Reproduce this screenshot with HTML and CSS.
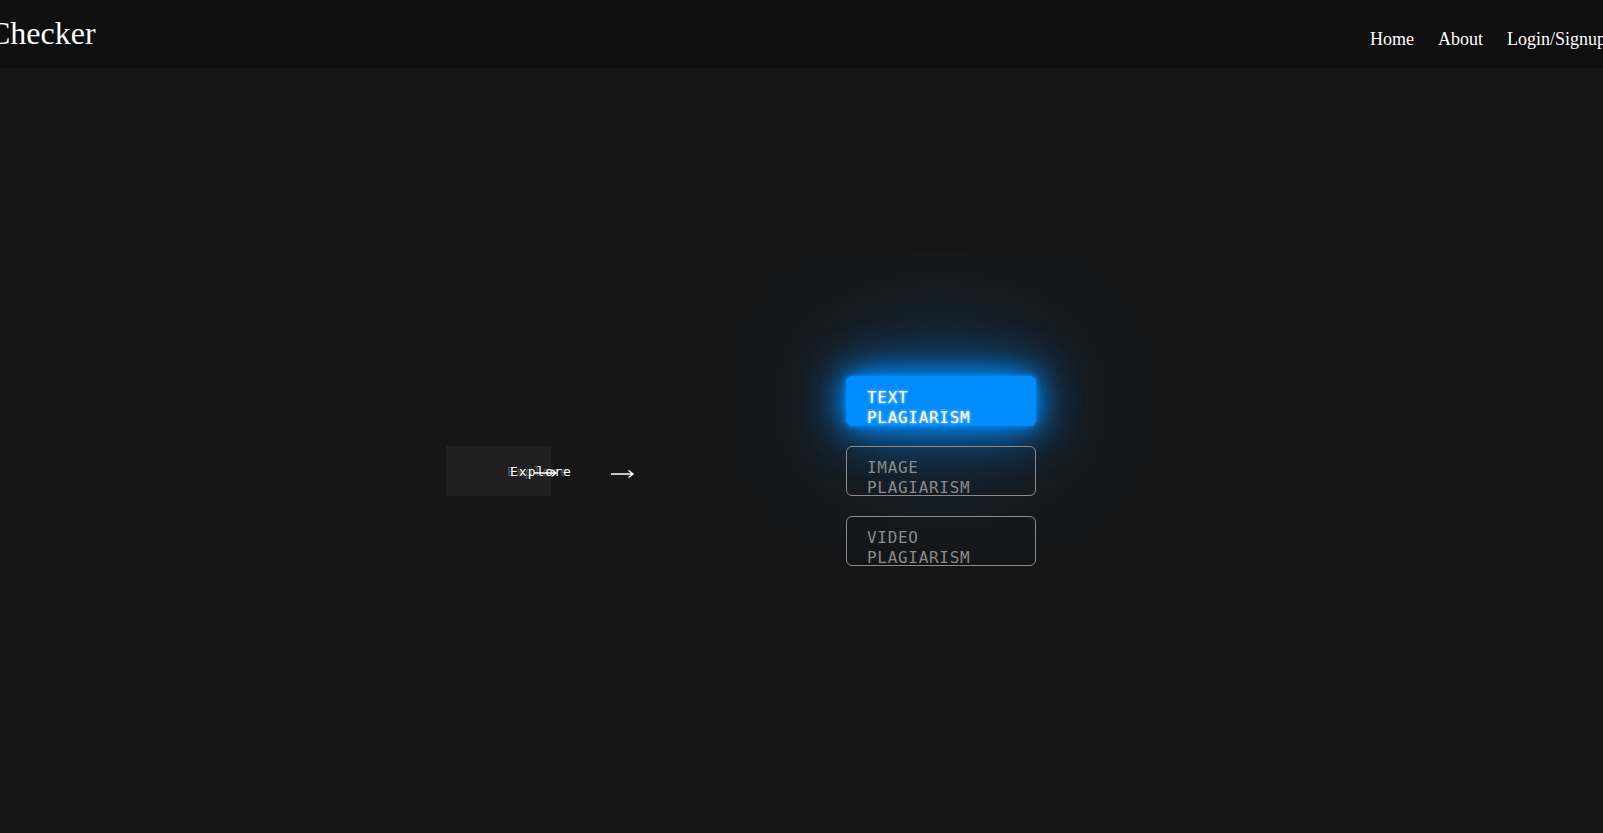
FILE: index.html
```html
<!DOCTYPE html>
<html lang="en">
<head>
<meta charset="utf-8">
<title>Plagiarism Checker</title>
<link rel="stylesheet" href="styles.css">
</head>
<body>
<header class="topbar">
  <div class="brand">Checker</div>
  <nav class="nav">
    <a href="#" class="nav-link">Home</a>
    <a href="#" class="nav-link">About</a>
    <a href="#" class="nav-link">Login/Signup</a>
  </nav>
</header>
<main class="hero">
  <div class="explore">
    <div class="explore-box">
      <span class="explore-ghost">Explore</span>
      <span class="explore-label">Explore</span>
      <svg class="explore-arrow-in" width="24" height="10" viewBox="0 0 24 10"><path d="M0 5H22M17.5 1.5L22 5L17.5 8.5" fill="none" stroke="#fff" stroke-width="1.4"/></svg>
    </div>
    <svg class="explore-arrow" width="24" height="10" viewBox="0 0 24 10"><path d="M0 5H22M17.5 1.5L22 5L17.5 8.5" fill="none" stroke="#fff" stroke-width="1.4"/></svg>
  </div>
  <div class="options">
    <button class="opt opt-active">TEXT PLAGIARISM</button>
    <button class="opt">IMAGE PLAGIARISM</button>
    <button class="opt">VIDEO PLAGIARISM</button>
  </div>
</main>
</body>
</html>
```
FILE: styles.css
```css
html, body {
  margin: 0;
  padding: 0;
}
body {
  background: #161616;
  color: #fff;
  font-family: "Liberation Serif", serif;
  overflow: hidden;
  height: 833px;
}
.topbar {
  height: 68px;
  background: #0f0f0f;
  display: flex;
  justify-content: space-between;
  align-items: flex-start;
  box-sizing: border-box;
}
.brand {
  font-size: 32px;
  line-height: 36px;
  margin-left: -11px;
  padding-top: 15px;
}
.nav {
  display: flex;
  gap: 24px;
  margin-right: -3px;
  padding-top: 28px;
}
.nav-link {
  color: #fff;
  text-decoration: none;
  font-size: 18px;
  line-height: 22px;
}
.hero {
  display: flex;
  align-items: center;
  padding: 308px 0 0 446px;
}
.explore {
  display: flex;
  align-items: center;
}
.explore-box {
  position: relative;
  width: 105px;
  height: 50px;
  background: #202020;
}
.explore-ghost,
.explore-label {
  position: absolute;
  top: 18px;
  font-family: "DejaVu Sans Mono", monospace;
  font-size: 13px;
  letter-spacing: 1px;
  line-height: 16px;
}
.explore-ghost {
  left: 61px;
  color: #5a5a5a;
}
.explore-label {
  left: 64px;
  color: #fff;
}
.explore-arrow-in {
  position: absolute;
  left: 88px;
  top: 22px;
}
.explore-arrow {
  margin-left: 60px;
  margin-top: 6px;
}
.options {
  display: flex;
  flex-direction: column;
  gap: 20px;
  margin-left: 211px;
}
.opt {
  width: 190px;
  height: 50px;
  box-sizing: border-box;
  border: 1px solid #8a8a8a;
  border-radius: 6px;
  background: transparent;
  color: #8a8a8a;
  font-family: "DejaVu Sans Mono", monospace;
  font-size: 16px;
  letter-spacing: 0.7px;
  line-height: 20px;
  text-align: left;
  padding: 11px 20px 0;
  display: block;
  overflow: visible;
}
.opt-active {
  background: #008cff;
  border-color: #008cff;
  color: #fff;
  text-shadow: 0 0 3px rgba(255,255,255,0.8);
  box-shadow: 0 0 5px #008cff, 0 0 25px #008cff, 0 0 50px #008cff, 0 0 130px rgba(0,140,255,0.7);
}
```
